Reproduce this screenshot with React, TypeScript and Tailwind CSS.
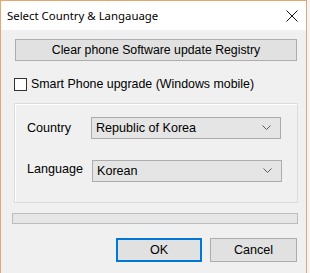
import React from "react";

const ui = { fontFamily: '"Liberation Sans", Arial, sans-serif' };

function Chevron() {
  return (
    <svg width="9" height="6" viewBox="0 0 9 6" className="shrink-0">
      <path d="M0.5 0.5 L4.5 4.5 L8.5 0.5" fill="none" stroke="#5a5a5a" strokeWidth="1" />
    </svg>
  );
}

function Select({ value }: { value: string }) {
  return (
    <div className="w-[190px] h-[22px] bg-[#e5e5e5] border border-[#acacac] flex items-center justify-between pl-[4px] pr-[9px]">
      <span className="text-[12.6px] text-black leading-none">{value}</span>
      <Chevron />
    </div>
  );
}

export default function App() {
  return (
    <div className="w-[310px] h-[273px] bg-[#f4f4f4] overflow-hidden" style={ui}>
      <div className="w-[307px] h-[273px] border-l border-r border-t border-[#e3a86f] flex flex-col">
        {/* TITLE BAR */}
        <div className="h-[29px] bg-white flex items-center justify-between pl-[6px] pr-[8px] shrink-0">
          <span
            className="text-[11.4px] text-black"
            style={{ fontFamily: '"Noto Sans", "Open Sans", sans-serif' }}
          >
            Select Country &amp; Langauage
          </span>
          <svg width="12" height="12" viewBox="0 0 12 12">
            <path d="M0.5 0.5 L11.5 11.5 M11.5 0.5 L0.5 11.5" stroke="#111" strokeWidth="1" />
          </svg>
        </div>

        {/* BODY */}
        <div className="flex-1 bg-[#f0f0f0] pt-[9px] pl-[13px] pr-[8px]">
          <button className="w-[282px] h-[22px] bg-[#e1e1e1] border border-[#adadad] text-[12.3px] text-black flex items-center justify-center ml-[1px]">
            Clear phone Software update Registry
          </button>

          <label className="flex items-center mt-[17px] h-[13px]">
            <span className="w-[13px] h-[13px] bg-white border border-[#333] shrink-0" />
            <span className="ml-[4px] text-[12.4px] text-black leading-none">
              Smart Phone upgrade (Windows mobile)
            </span>
          </label>

          {/* GROUP */}
          <div className="mt-[12px] w-[284px] h-[100px] border border-[#dcdcdc] shadow-[inset_1px_1px_0_#ffffff] pl-[12px] pt-[13px] flex flex-col gap-[21px]">
            <div className="flex items-center">
              <span className="w-[64px] text-[12.6px] text-black">Country</span>
              <Select value="Republic of Korea" />
            </div>
            <div className="flex items-center">
              <span className="w-[65px] text-[12.6px] text-black -mt-[4px]">Language</span>
              <Select value="Korean" />
            </div>
          </div>

          {/* PROGRESS */}
          <div className="mt-[10px] -ml-[2px] w-[286px] h-[11px] bg-[#e6e6e6] border border-[#bcbcbc]" />

          {/* ACTIONS */}
          <div className="flex justify-end gap-[8px] mt-[14px] pr-[1px]">
            <button className="w-[86px] h-[24px] bg-[#e1e1e1] border-2 border-[#0078d7] text-[12.6px] text-black">
              OK
            </button>
            <button className="w-[87px] h-[24px] bg-[#e1e1e1] border border-[#adadad] text-[12.6px] text-black">
              Cancel
            </button>
          </div>
        </div>
      </div>
    </div>
  );
}
